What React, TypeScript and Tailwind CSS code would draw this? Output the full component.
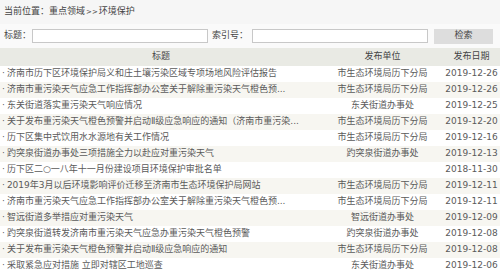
import React from "react";

const rows: [string, string, string][] = [
  ["济南市历下区环境保护局义和庄土壤污染区域专项场地风险评估报告", "市生态环境局历下分局", "2019-12-26"],
  ["济南市重污染天气应急工作指挥部办公室关于解除重污染天气橙色预...", "市生态环境局历下分局", "2019-12-26"],
  ["东关街道落实重污染天气响应情况", "东关街道办事处", "2019-12-25"],
  ["关于发布重污染天气橙色预警并启动Ⅱ级应急响应的通知（济南市重污染...", "市生态环境局历下分局", "2019-12-20"],
  ["历下区集中式饮用水水源地有关工作情况", "市生态环境局历下分局", "2019-12-16"],
  ["趵突泉街道办事处三项措施全力以赴应对重污染天气", "趵突泉街道办事处", "2019-12-13"],
  ["历下区二○一八年十一月份建设项目环境保护审批名单", "", "2018-11-30"],
  ["2019年3月以后环境影响评价迁移至济南市生态环境保护局网站", "市生态环境局历下分局", "2019-12-11"],
  ["济南市重污染天气应急工作指挥部办公室关于解除重污染天气橙色预...", "市生态环境局历下分局", "2019-12-11"],
  ["智远街道多举措应对重污染天气", "智远街道办事处", "2019-12-09"],
  ["趵突泉街道转发济南市重污染天气应急办重污染天气橙色预警", "趵突泉街道办事处", "2019-12-08"],
  ["关于发布重污染天气橙色预警并启动Ⅱ级应急响应的通知", "市生态环境局历下分局", "2019-12-08"],
  ["采取紧急应对措施 立即对辖区工地巡查", "东关街道办事处", "2019-12-06"],
];

export default function App() {
  return (
    <div
      className="w-[500px] h-[272px] overflow-hidden bg-white text-[9px] text-[#5a5a5a]"
      style={{ fontFamily: '"DejaVu Sans", "Noto Sans CJK SC", sans-serif' }}
    >
      <div className="h-[24px] bg-[#f6f6f6] flex items-center pl-[4px] text-[#444]">
        当前位置：重点领域 <span className="text-[7px] mx-[1px]">&gt;&gt;</span>环境保护
      </div>
      <div className="h-[24px] bg-[#fafafa] flex items-center pl-[4px] text-[#444]">
        <span className="w-[28px]">标题：</span>
        <div className="w-[176px] h-[14px] bg-white border border-[#c8c8c8]" />
        <span className="ml-[4px] w-[40px]">索引号：</span>
        <div className="w-[176px] h-[14px] bg-white border border-[#c8c8c8]" />
        <div className="ml-[6px] w-[59px] h-[15px] bg-[#dddddd] flex items-center justify-center">检索</div>
      </div>
      <div className="h-[18px] bg-[#e9eae4] flex items-center text-[#444]">
        <div className="w-[322px] text-center">标题</div>
        <div className="w-[121px] text-center">发布单位</div>
        <div className="w-[57px] text-center">发布日期</div>
      </div>
      {rows.map((r, i) => (
        <div
          key={i}
          className={`h-[16px] flex items-center ${i % 2 === 1 ? "bg-[#f7f6f1]" : "bg-white"}`}
        >
          <div className="w-[322px] pl-[2px] whitespace-nowrap overflow-hidden">
            <span className="mr-[2px]">·</span>
            {r[0]}
          </div>
          <div className="w-[121px] text-center whitespace-nowrap">{r[1]}</div>
          <div className="w-[57px] text-center whitespace-nowrap">{r[2]}</div>
        </div>
      ))}
    </div>
  );
}
